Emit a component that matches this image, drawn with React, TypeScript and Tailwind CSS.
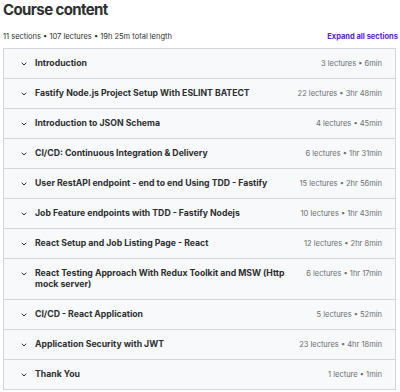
import React from 'react';

type Section = { title: string; meta: string };

const sections: Section[] = [
  { title: 'Introduction', meta: '3 lectures • 6min' },
  { title: 'Fastify Node.js Project Setup With ESLINT BATECT', meta: '22 lectures • 3hr 48min' },
  { title: 'Introduction to JSON Schema', meta: '4 lectures • 45min' },
  { title: 'CI/CD: Continuous Integration & Delivery', meta: '6 lectures • 1hr 31min' },
  { title: 'User RestAPI endpoint - end to end Using TDD - Fastify', meta: '15 lectures • 2hr 56min' },
  { title: 'Job Feature endpoints with TDD - Fastify Nodejs', meta: '10 lectures • 1hr 43min' },
  { title: 'React Setup and Job Listing Page - React', meta: '12 lectures • 2hr 8min' },
  { title: 'React Testing Approach With Redux Toolkit and MSW (Http mock server)', meta: '6 lectures • 1hr 17min' },
  { title: 'CI/CD - React Application', meta: '5 lectures • 52min' },
  { title: 'Application Security with JWT', meta: '23 lectures • 4hr 18min' },
  { title: 'Thank You', meta: '1 lecture • 1min' },
];

function Chevron() {
  return (
    <svg width="8" height="8" viewBox="0 0 24 24" fill="none" stroke="#2d2f31" strokeWidth="3" strokeLinecap="round" strokeLinejoin="round" className="shrink-0">
      <path d="M6 9l6 6 6-6" />
    </svg>
  );
}

export default function App() {
  return (
    <div className="w-[400px] h-[392px] bg-white px-[3px] text-[#2d2f31]" style={{ fontFamily: '"Inter", "Liberation Sans", sans-serif' }}>
      <h2 className="text-[15px] font-bold tracking-[-0.04em] leading-[18px] pt-[1px]">Course content</h2>
      <div className="flex items-end justify-between mt-[12px] h-[11px]">
        <p className="text-[7.5px] leading-[11px]">11 sections • 107 lectures • 19h 25m total length</p>
        <button className="text-[7.5px] leading-[11px] font-bold text-[#5624d0] mr-[-1px]">Expand all sections</button>
      </div>

      {/* Section list */}
      <div className="mt-[6px] mr-[1px] border border-[#d1d7dc]">
        {sections.map((s, i) => (
          <div
            key={s.title}
            className={`flex items-start gap-[14px] bg-[#f7f9fa] pl-[16px] pr-[13px] py-[9px] ${i > 0 ? 'border-t border-[#d1d7dc]' : ''}`}
          >
            <div className="flex flex-1 items-start gap-[7px]">
              <div className="h-[11px] flex items-center"><Chevron /></div>
              <span className="text-[8.7px] font-bold leading-[11px]">{s.title}</span>
            </div>
            <span className="text-[7.5px] leading-[11px] text-[#6a6f73] whitespace-nowrap">{s.meta}</span>
          </div>
        ))}
      </div>
    </div>
  );
}
